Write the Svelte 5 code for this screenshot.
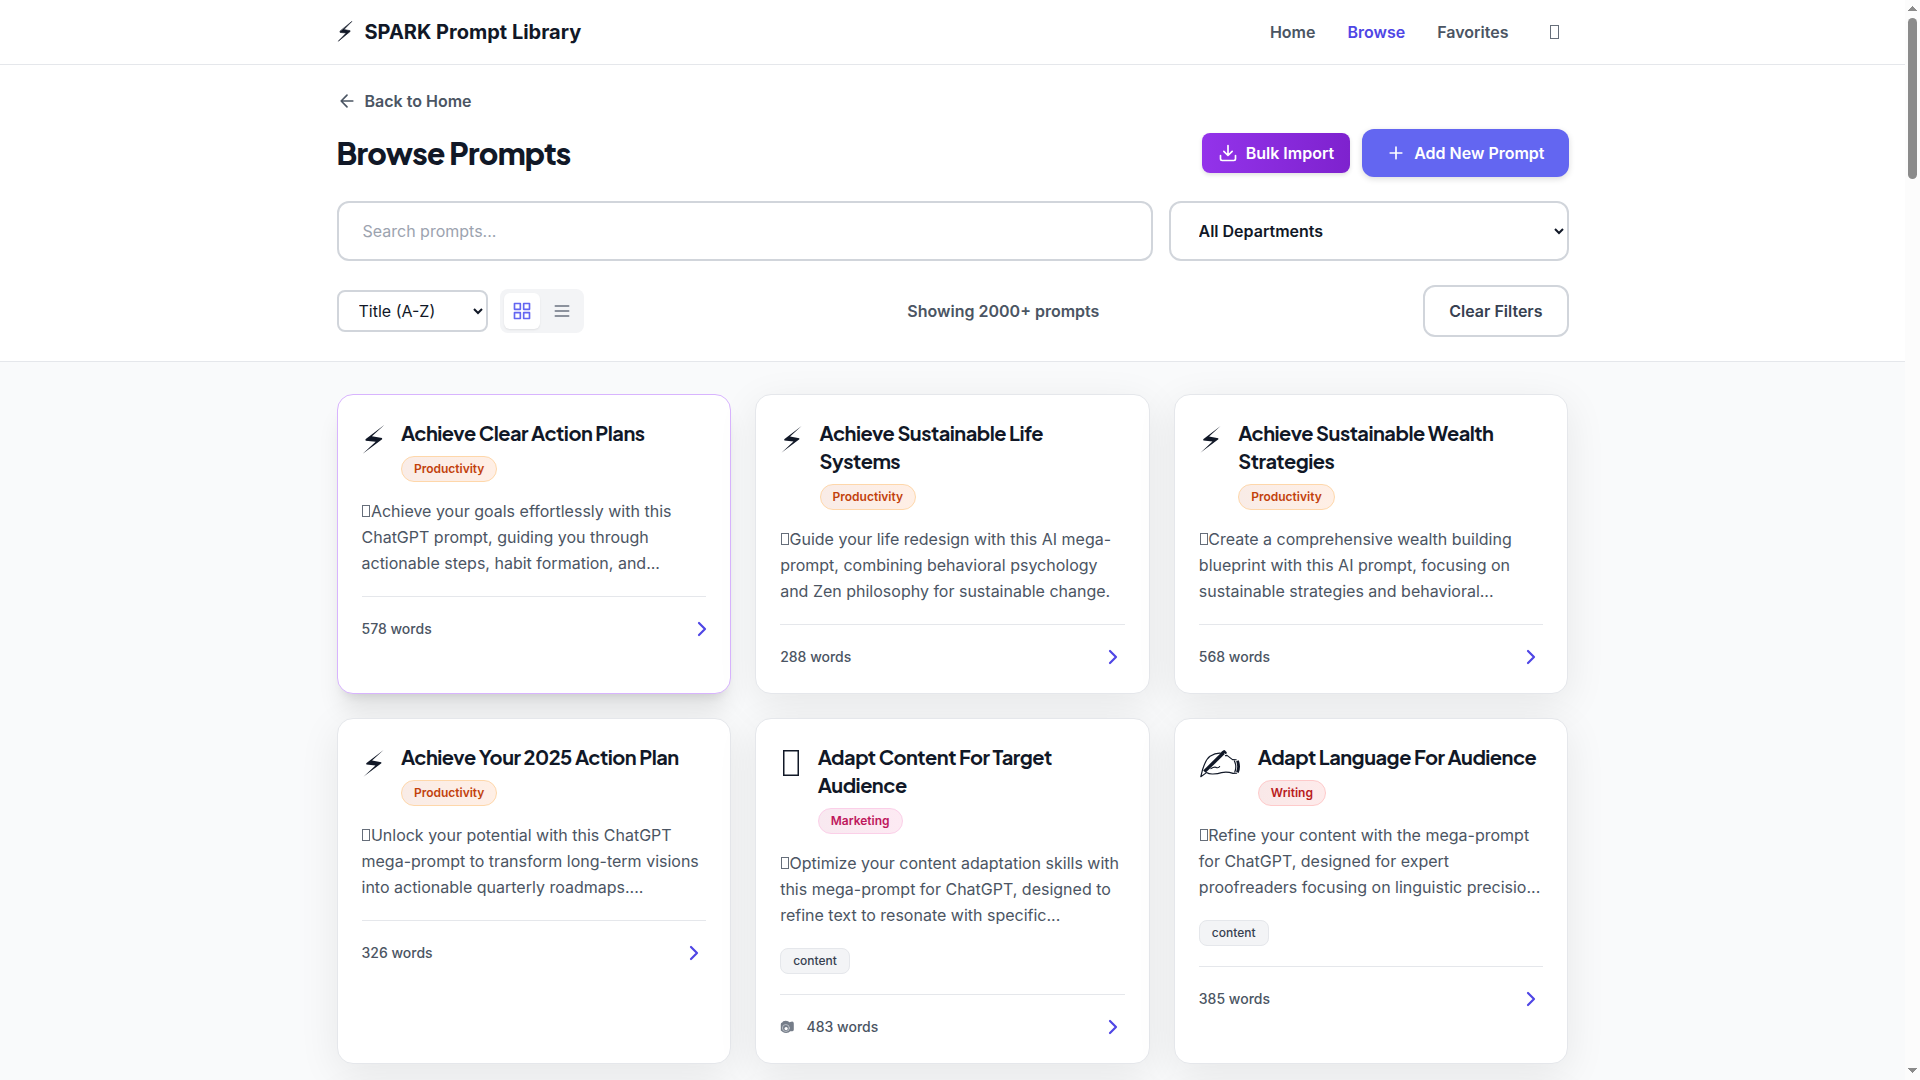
<script>
  const tones = { Productivity: 'orange', Marketing: 'pink', Writing: 'red' };
  const cards = [
    { icon: 'bolt', title: 'Achieve Clear Action Plans', dept: 'Productivity', words: 578, active: true,
      text: 'Achieve your goals effortlessly with this ChatGPT prompt, guiding you through actionable steps, habit formation, and...' },
    { icon: 'bolt', title: 'Achieve Sustainable Life Systems', dept: 'Productivity', words: 288,
      text: 'Guide your life redesign with this AI mega-prompt, combining behavioral psychology and Zen philosophy for sustainable change.' },
    { icon: 'bolt', title: 'Achieve Sustainable Wealth Strategies', dept: 'Productivity', words: 568,
      text: 'Create a comprehensive wealth building blueprint with this AI prompt, focusing on sustainable strategies and behavioral...' },
    { icon: 'bolt', title: 'Achieve Your 2025 Action Plan', dept: 'Productivity', words: 326,
      text: 'Unlock your potential with this ChatGPT mega-prompt to transform long-term visions into actionable quarterly roadmaps....' },
    { icon: 'box', title: 'Adapt Content For Target Audience', dept: 'Marketing', words: 483, tag: 'content', photo: true,
      text: 'Optimize your content adaptation skills with this mega-prompt for ChatGPT, designed to refine text to resonate with specific...' },
    { icon: 'hand', title: 'Adapt Language For Audience', dept: 'Writing', words: 385, tag: 'content',
      text: 'Refine your content with the mega-prompt for ChatGPT, designed for expert proofreaders focusing on linguistic precisio...' }
  ];
  const nextRow = [0, 1, 2];
</script>

{#snippet bolt()}
  <path d="M21.9 7L10.4 17.6L19.6 19.2L19.7 20.3L2 33.5L13.8 22.4L4.7 21.6L4.5 20.3Z" />
{/snippet}

<div class="window">
  <div class="page">
    <header class="topbar">
      <div class="container bar">
        <div class="brand">
          <svg class="logo" viewBox="0 2 24 38" preserveAspectRatio="none">{@render bolt()}</svg>
          <span>SPARK Prompt Library</span>
        </div>
        <nav>
          <a href="#home">Home</a>
          <a href="#browse" class="current">Browse</a>
          <a href="#favorites">Favorites</a>
          <button class="theme" aria-label="Toggle theme"><span class="glyph"></span></button>
        </nav>
      </div>
    </header>

    <section class="controls">
      <div class="container">
        <a class="back" href="#home">
          <svg viewBox="0 0 24 24"><path d="M19 12H5M12 19l-7-7 7-7" /></svg>
          Back to Home
        </a>
        <div class="heading">
          <h1>Browse Prompts</h1>
          <div class="actions">
            <button class="import">
              <svg viewBox="0 0 24 24"><path d="M21 15v4a2 2 0 0 1-2 2H5a2 2 0 0 1-2-2v-4M7 10l5 5 5-5M12 15V3" /></svg>
              Bulk Import
            </button>
            <button class="add">
              <svg viewBox="0 0 24 24"><path d="M5 12h14M12 5v14" /></svg>
              Add New Prompt
            </button>
          </div>
        </div>
        <div class="search">
          <input type="text" placeholder="Search prompts..." />
          <select class="dept"><option>All Departments</option></select>
        </div>
        <div class="filters">
          <div class="view">
            <select class="sort"><option>Title (A-Z)</option></select>
            <div class="toggle">
              <button class="on" aria-label="Grid view">
                <svg viewBox="0 0 24 24"><rect x="3" y="3" width="7" height="7" /><rect x="14" y="3" width="7" height="7" /><rect x="3" y="14" width="7" height="7" /><rect x="14" y="14" width="7" height="7" /></svg>
              </button>
              <button aria-label="List view">
                <svg viewBox="0 0 24 24"><path d="M4 6h16M4 12h16M4 18h16" /></svg>
              </button>
            </div>
          </div>
          <p>Showing 2000+ prompts</p>
          <button class="clear">Clear Filters</button>
        </div>
      </div>
    </section>

    <main class="container grid">
      {#each cards as card}
        <article class="card" class:active={card.active}>
          <div class="head">
            {#if card.icon === 'bolt'}
              <svg class="icon bolt" viewBox="0.3 0 23.4 40">{@render bolt()}</svg>
            {:else if card.icon === 'hand'}
              <svg class="icon hand" viewBox="0 0 43 40">
                <path class="fine" d="M1.8 33.7L3.6 26.5C5 22 7.5 15.8 11 13.3C15 10.8 19.5 9.8 23 10.4M26.5 12.6L28 12.4L33.5 16.6L37.2 16.8M1.8 33.7L7.5 29.6Q10 31.2 14 31Q19 30.8 22.5 29.6Q28 28.2 34 30.4L37.6 30.2M12 25.6Q15.5 23.4 17.5 24.6Q19.8 25.2 20.6 23.6M35.4 18Q38 23.6 35.8 29" />
                <path class="pen" d="M5.4 28.6L24.6 9.8" />
                <path class="cap" d="M23.4 9.4L25.2 8.3L26.6 9.8" />
                <path class="cuff" d="M38.4 17.8Q40.8 23.6 38.4 29.4" />
              </svg>
            {:else}
              <span class="icon box"></span>
            {/if}
            <div>
              <h3>{card.title}</h3>
              <span class="badge {tones[card.dept]}">{card.dept}</span>
            </div>
          </div>
          <p class="text"><span class="glyph"></span>{card.text}</p>
          {#if card.tag}<span class="tag">{card.tag}</span>{/if}
          <div class="foot">
            <div class="meta">
              {#if card.photo}
                <svg class="photo" viewBox="0 0 14 14">
                  <path d="M.6 4.2Q.6 2.6 2 2.4L3 1.2Q5.6.4 8 1.2L9 2.2L12 1.6Q13.6 1.8 13.6 3.4V9.8Q13.6 11.2 12.2 11.2H10L8.4 12.6Q5 13.6 2.6 12L.6 10.6Z" />
                  <circle cx="5.7" cy="8" r="3.5" class="ring" />
                  <circle cx="5.9" cy="8.6" r="1.6" class="lens" />
                </svg>
              {/if}
              <span>{card.words} words</span>
            </div>
            <svg class="chevron" viewBox="0 0 24 24"><path d="M9 18l6-6-6-6" /></svg>
          </div>
        </article>
      {/each}
      {#each nextRow as n (n)}
        <article class="card blank"></article>
      {/each}
    </main>
  </div>

  <div class="scrollbar">
    <svg viewBox="0 0 15 18" shape-rendering="crispEdges"><path d="M3 11l4.5-5 4.5 5z" /></svg>
    <div class="thumb"></div>
    <svg class="down" viewBox="0 0 15 12" shape-rendering="crispEdges"><path d="M3 0l4.5 5 4.5-5z" /></svg>
  </div>
</div>

<style>
  :global(body) { margin: 0; overflow: hidden; }
  .window, .window * { box-sizing: border-box; }
  .window {
    display: flex; height: 1080px; overflow: hidden; background: #f9fafb;
    font-family: Inter, sans-serif; font-size: 16px; line-height: 24px; color: #111827;
  }
  .page { flex: 1; height: 1080px; overflow: hidden; }
  .container { width: 1280px; margin: 0 auto; padding: 0 24px; }
  button, input, select { font: inherit; color: inherit; margin: 0; }
  button { display: inline-flex; align-items: center; justify-content: center; border: 0; background: none; padding: 0; }
  svg { width: 20px; height: 20px; fill: none; stroke: currentColor; stroke-width: 2; stroke-linecap: round; stroke-linejoin: round; flex: none; }
  a { color: inherit; text-decoration: none; }
  h1, h3, p { margin: 0; }

  .topbar { height: 65px; background: #fff; border-bottom: 1px solid #e5e7eb; }
  .bar { display: flex; height: 64px; align-items: center; justify-content: space-between; }
  .brand { display: flex; align-items: center; gap: 12px; font-size: 20px; line-height: 28px; font-weight: 700; }
  .brand .logo { width: 16px; height: 28px; fill: currentColor; stroke-width: 0.9; stroke-linejoin: miter; }
  nav { display: flex; align-items: center; gap: 32px; font-weight: 600; color: #4b5563; }
  .current { color: #4f46e5; }
  .theme { padding: 8px; }
  .glyph { display: inline-block; width: 8px; height: 12px; margin: 0 0.6px 0 0.8px; border: 1px solid currentColor; opacity: 0.85; }
  .theme .glyph { width: 9px; height: 14px; margin: 0 1.5px; }

  .controls { height: 297px; background: #fff; border-bottom: 1px solid #e5e7eb; padding-top: 24px; }
  .back { display: flex; width: max-content; align-items: center; gap: 8px; font-weight: 600; color: #4b5563; }
  .heading { display: flex; align-items: center; justify-content: space-between; margin-top: 16px; height: 48px; }
  h1 { font-family: 'Plus Jakarta Sans', Inter, sans-serif; font-size: 30px; line-height: 36px; font-weight: 800; letter-spacing: -0.75px; }
  .actions { display: flex; align-items: center; gap: 12px; color: #fff; font-weight: 600; }
  .actions button { gap: 8px; }
  .import { height: 40px; padding: 0 16px; border-radius: 8px; background: linear-gradient(to right, #9333ea, #7e22ce); box-shadow: 0 2px 4px rgba(0, 0, 0, 0.12); }
  .add { height: 48px; padding: 0 24px; border-radius: 12px; background: #6366f1; box-shadow: 0 2px 6px rgba(0, 0, 0, 0.14); }
  .search { display: grid; grid-template-columns: 1fr 400px; gap: 16px; margin-top: 24px; }
  .search input, .search select { height: 60px; border: 2px solid #d1d5db; border-radius: 12px; background: #fff; padding: 0 24px; outline: 0; }
  input::placeholder { color: #9ca3af; }
  .dept { font-weight: 600; }
  .filters { display: flex; align-items: center; justify-content: space-between; margin-top: 24px; height: 52px; }
  .view { display: flex; align-items: center; gap: 12px; }
  .sort { width: 151px; height: 42px; border: 2px solid #d1d5db; border-radius: 8px; padding: 0 16px; background: #fff; }
  .toggle { display: flex; gap: 4px; padding: 4px; border-radius: 8px; background: #f3f4f6; color: #6b7280; }
  .toggle button { width: 36px; height: 36px; border-radius: 6px; }
  .toggle .on { background: #fff; color: #6366f1; box-shadow: 0 1px 2px rgba(0, 0, 0, 0.08); }
  .filters p { font-weight: 600; color: #4b5563; }
  .clear { height: 52px; padding: 0 24px; border: 2px solid #d1d5db; border-radius: 12px; font-weight: 600; color: #374151; background: #fff; }

  .grid { display: grid; grid-template-columns: repeat(3, 1fr); gap: 24px; padding-top: 32px; }
  .card { background: #fff; border: 1px solid #e5e7eb; border-radius: 16px; padding: 24px; box-shadow: 0 10px 40px rgba(0, 0, 0, 0.08); }
  .card.active { border-color: #d8b4fe; box-shadow: 0 20px 25px -5px rgba(0, 0, 0, 0.1), 0 8px 10px -6px rgba(0, 0, 0, 0.1); }
  .blank { height: 300px; }
  .head { display: flex; align-items: flex-start; gap: 16px; margin-bottom: 16px; }
  .icon { height: 40px; }
  .icon.bolt { width: 23.4px; fill: currentColor; stroke: none; }
  .icon.hand { width: 43px; }
  .fine { stroke-width: 1.15; }
  .pen { stroke-width: 3.4; stroke-linecap: butt; }
  .cap { stroke-width: 2.4; }
  .cuff { stroke-width: 2.8; stroke-linecap: butt; }
  .icon.box { flex: none; width: 16px; height: 26px; margin: 7px 2.8px; box-shadow: inset 0 0 0 1.5px currentColor; }
  .active .icon { transform: scale(1.1); }
  h3 { font-family: 'Plus Jakarta Sans', Inter, sans-serif; font-size: 20px; line-height: 28px; font-weight: 700; letter-spacing: -0.5px; }
  .badge { display: flex; width: max-content; height: 26px; margin-top: 9px; align-items: center; padding: 0 12px; border: 1px solid; border-radius: 13px; font-size: 12px; line-height: 16px; font-weight: 600; }
  .orange { color: #c2410c; border-color: #fed7aa; background: linear-gradient(to right, #f9ece7, #ffefe5); }
  .pink { color: #be185d; border-color: #fbcfe8; background: linear-gradient(to right, #f8e9f0, #fdeaf3); }
  .red { color: #b91c1c; border-color: #fecaca; background: linear-gradient(to right, #f9e8e8, #feebeb); }
  .text { color: #4b5563; line-height: 26px; }
  .tag { display: flex; width: max-content; height: 26px; margin-top: 20px; align-items: center; padding: 0 12px; border: 1px solid #e5e7eb; border-radius: 8px; background: #f3f4f6; color: #374151; font-size: 12px; line-height: 16px; font-weight: 500; }
  .foot { display: flex; align-items: center; justify-content: space-between; margin-top: 20px; padding-top: 20px; border-top: 1px solid #e5e7eb; color: #4b5563; font-size: 14px; line-height: 20px; font-weight: 500; }
  .meta { display: flex; align-items: center; gap: 12px; }
  .photo { width: 14.4px; height: 14px; fill: #757d89; stroke: none; }
  .ring { fill: none; stroke: #d5d8dc; stroke-width: 0.7; }
  .lens { fill: #fff; }
  .chevron { width: 24px; height: 24px; color: #4f46e5; stroke-width: 2.2; }
  .active .chevron { transform: translateX(8px); }

  .scrollbar { display: flex; flex-direction: column; align-items: center; width: 15px; background: #fcfcfc; }
  .scrollbar svg { width: 15px; height: 18px; fill: #8b8b8b; stroke: none; }
  .scrollbar .down { height: 12px; margin-top: auto; }
  .thumb { width: 9px; height: 161px; border-radius: 5px; background: #8b8b8b; }
</style>
